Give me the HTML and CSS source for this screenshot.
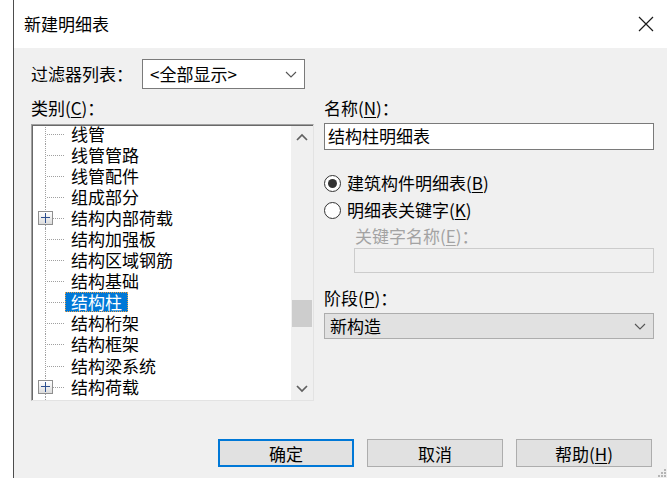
FILE: index.html
```html
<!DOCTYPE html>
<html lang="zh-CN">
<head>
  <meta charset="UTF-8" />
  <title>新建明细表</title>
  <link rel="stylesheet" href="styles.css">
</head>
<body>
  <div class="window">
    <div class="titlebar">
      <span class="title">新建明细表</span>
      <svg class="close" width="16" height="16" viewBox="0 0 16 16">
        <path d="M1 1 L15 15 M15 1 L1 15" stroke="#1a1a1a" stroke-width="1.2" fill="none" />
      </svg>
    </div>

    <div class="content">
      <div class="filter-row">
        <span class="filter-label">过滤器列表：</span>
        <div class="combo">
          <span>&lt;全部显示&gt;</span>
          <svg width="12" height="7" viewBox="0 0 12 7"><path d="M1 1 L6 6 L11 1" stroke="#555" stroke-width="1.1" fill="none" /></svg>
        </div>
      </div>

      <div class="main">
        <div class="left-col">
          <div class="field-label">类别(<u>C</u>)：</div>
          <div class="tree-box">
            <ul class="tree">
              <li class="node"><span class="branch"></span><span class="node-label">线管</span></li>
              <li class="node"><span class="branch"></span><span class="node-label">线管管路</span></li>
              <li class="node"><span class="branch"></span><span class="node-label">线管配件</span></li>
              <li class="node"><span class="branch"></span><span class="node-label">组成部分</span></li>
              <li class="node"><span class="branch"><span class="expander"></span></span><span class="node-label">结构内部荷载</span></li>
              <li class="node"><span class="branch"></span><span class="node-label">结构加强板</span></li>
              <li class="node"><span class="branch"></span><span class="node-label">结构区域钢筋</span></li>
              <li class="node"><span class="branch"></span><span class="node-label">结构基础</span></li>
              <li class="node"><span class="branch"></span><span class="node-label selected">结构柱</span></li>
              <li class="node"><span class="branch"></span><span class="node-label">结构桁架</span></li>
              <li class="node"><span class="branch"></span><span class="node-label">结构框架</span></li>
              <li class="node"><span class="branch"></span><span class="node-label">结构梁系统</span></li>
              <li class="node"><span class="branch"><span class="expander"></span></span><span class="node-label">结构荷载</span></li>
              <li class="node"><span class="branch"></span><span class="node-label">结构路径钢筋</span></li>
            </ul>
            <div class="scrollbar">
              <div class="scroll-btn">
                <svg width="12" height="8" viewBox="0 0 12 8"><path d="M1 7 L6 2 L11 7" stroke="#606060" stroke-width="1.7" fill="none" /></svg>
              </div>
              <div class="scroll-track"><div class="scroll-thumb"></div></div>
              <div class="scroll-btn">
                <svg width="12" height="8" viewBox="0 0 12 8"><path d="M1 1 L6 6 L11 1" stroke="#606060" stroke-width="1.7" fill="none" /></svg>
              </div>
            </div>
          </div>
        </div>

        <div class="right-col">
          <div class="field-label">名称(<u>N</u>)：</div>
          <div class="textbox">结构柱明细表</div>

          <div class="radio-row first">
            <span class="radio checked"></span>
            <span>建筑构件明细表(<u>B</u>)</span>
          </div>
          <div class="radio-row">
            <span class="radio"></span>
            <span>明细表关键字(<u>K</u>)</span>
          </div>
          <div class="field-label disabled indent">关键字名称(<u>E</u>)：</div>
          <div class="textbox disabled-box indent"></div>

          <div class="field-label phase">阶段(<u>P</u>)：</div>
          <div class="combo gray">
            <span>新构造</span>
            <svg width="12" height="7" viewBox="0 0 12 7"><path d="M1 1 L6 6 L11 1" stroke="#555" stroke-width="1.1" fill="none" /></svg>
          </div>
        </div>
      </div>

      <div class="buttons">
        <button class="btn default">确定</button>
        <button class="btn">取消</button>
        <button class="btn">帮助(<u>H</u>)</button>
      </div>

      <svg class="grip" width="8" height="8" viewBox="0 0 8 8">
        <rect x="6" y="0" width="2" height="2" fill="#b5b5b5" />
        <rect x="3" y="3" width="2" height="2" fill="#b5b5b5" />
        <rect x="6" y="3" width="2" height="2" fill="#b5b5b5" />
        <rect x="0" y="6" width="2" height="2" fill="#b5b5b5" />
        <rect x="3" y="6" width="2" height="2" fill="#b5b5b5" />
        <rect x="6" y="6" width="2" height="2" fill="#b5b5b5" />
      </svg>
    </div>
  </div>
</body>
</html>
```

FILE: styles.css
```css
body {
  margin: 0;
  background: #fff;
  font-family: "Noto Sans CJK SC", "Microsoft YaHei", sans-serif;
  font-size: 17px;
  line-height: 20px;
  color: #000;
}
u {
  text-decoration: underline;
  text-underline-offset: 2px;
}
.window {
  margin-left: 13px;
  height: 478px;
  border-left: 1px solid #4d4d4d;
  display: flex;
  flex-direction: column;
}
.titlebar {
  height: 48px;
  flex: none;
  background: #fff;
  display: flex;
  align-items: center;
  justify-content: space-between;
  padding: 0 13px 0 10px;
}
.content {
  flex: 1;
  position: relative;
  background: #f0f0f0;
  padding: 11px 13px 11px 17px;
  display: flex;
  flex-direction: column;
}
.filter-row {
  display: flex;
  align-items: center;
  height: 30px;
}
.filter-label {
  width: 111px;
}
.combo {
  box-sizing: border-box;
  height: 30px;
  width: 163px;
  border: 1px solid #7a7a7a;
  background: #fff;
  display: flex;
  align-items: center;
  justify-content: space-between;
  padding: 0 7px 0 7px;
}
.combo.gray {
  width: 100%;
  height: 26px;
  margin-top: 5px;
  background: #e1e1e1;
  border-color: #adadad;
  padding: 0 7px 0 5px;
}
.main {
  display: flex;
  gap: 10px;
}
.left-col {
  width: 283px;
}
.right-col {
  flex: 1;
}
.field-label {
  margin-top: 9px;
  height: 20px;
}
.field-label.disabled {
  margin-top: 5px;
  color: #a3a3a3;
}
.field-label.phase {
  margin-top: 15px;
}
.indent {
  margin-left: 30px;
}
.field-label.indent {
  margin-left: 31px;
}

/* category tree */
.tree-box {
  box-sizing: border-box;
  margin-top: 6px;
  height: 277px;
  display: flex;
  background: #fff;
  border: 1px solid;
  border-color: #a0a0a0 #e3e3e3 #e3e3e3 #a0a0a0;
  box-shadow: inset 1px 1px 0 #696969;
  padding: 1px 0 0 1px;
}
.tree {
  flex: 1;
  list-style: none;
  margin: 0;
  padding: 0;
  overflow: hidden;
}
.node {
  display: flex;
  align-items: center;
  height: 21.1px;
}
.node:first-child {
  margin-top: -3px;
}
.branch {
  position: relative;
  width: 32px;
  height: 100%;
  flex: none;
}
.branch::before {
  content: "";
  position: absolute;
  left: 12px;
  top: 0;
  bottom: 0;
  border-left: 1px dotted #a0a0a0;
}
.branch::after {
  content: "";
  position: absolute;
  left: 14px;
  right: 1px;
  top: 50%;
  border-top: 1px dotted #a0a0a0;
}
.expander {
  position: absolute;
  z-index: 1;
  left: 5px;
  top: 50%;
  margin-top: -7px;
  width: 15px;
  height: 14px;
  box-sizing: border-box;
  border: 1px solid #8f8f8f;
  background: linear-gradient(#ffffff, #dcdcdc);
}
.expander::before,
.expander::after {
  content: "";
  position: absolute;
  background: #2d4f8e;
}
.expander::before {
  left: 2px;
  right: 2px;
  top: 5px;
  height: 1px;
}
.expander::after {
  top: 1px;
  bottom: 1px;
  left: 6px;
  width: 1px;
}
.node-label {
  line-height: 18px;
  padding: 0 5px;
  border: 1px dotted transparent;
  white-space: nowrap;
}
.node-label.selected {
  background: #0078d7;
  color: #fff;
  border-color: #e8a04a;
}
.scrollbar {
  width: 22px;
  flex: none;
  background: #f0f0f0;
  display: flex;
  flex-direction: column;
}
.scroll-btn {
  height: 22px;
  display: flex;
  align-items: center;
  justify-content: center;
}
.scroll-track {
  flex: 1;
}
.scroll-thumb {
  margin: 152px 1px 0 1px;
  height: 27px;
  background: #cdcdcd;
}

/* right side */
.textbox {
  box-sizing: border-box;
  margin-top: 5px;
  height: 27px;
  border: 1px solid #7a7a7a;
  background: #fff;
  padding: 2px 3px;
}
.disabled-box {
  margin-top: 2px;
  height: 25px;
  border-color: #cccccc;
  background: #f0f0f0;
}
.radio-row {
  display: flex;
  align-items: center;
  gap: 6px;
  height: 22px;
  margin-top: 5px;
}
.radio-row.first {
  margin-top: 22px;
}
.radio {
  box-sizing: border-box;
  width: 17px;
  height: 17px;
  border: 1px solid #333;
  border-radius: 50%;
  background: #fff;
  display: flex;
  align-items: center;
  justify-content: center;
}
.radio.checked::after {
  content: "";
  width: 9px;
  height: 9px;
  border-radius: 50%;
  background: #333;
}

/* buttons */
.buttons {
  margin-top: auto;
  display: flex;
  justify-content: flex-end;
  gap: 13px;
  padding-right: 2px;
}
.btn {
  box-sizing: border-box;
  width: 136px;
  height: 28px;
  background: #e1e1e1;
  border: 1px solid #adadad;
  font-family: inherit;
  font-size: 17px;
  color: #000;
  padding: 0;
}
.btn.default {
  border: 2px solid #0078d7;
}
.grip {
  position: absolute;
  right: 1px;
  bottom: 1px;
}
```
